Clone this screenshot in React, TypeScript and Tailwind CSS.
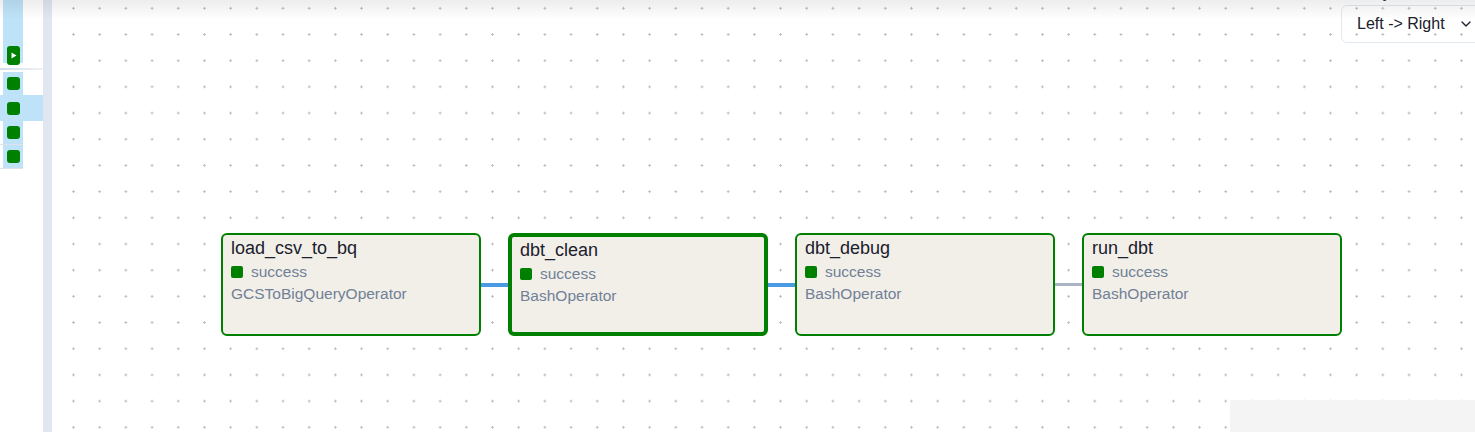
import { ChevronDown } from "lucide-react";

type TaskNode = {
  id: string;
  operator: string;
  selected?: boolean;
};

const tasks: TaskNode[] = [
  { id: "load_csv_to_bq", operator: "GCSToBigQueryOperator" },
  { id: "dbt_clean", operator: "BashOperator", selected: true },
  { id: "dbt_debug", operator: "BashOperator" },
  { id: "run_dbt", operator: "BashOperator" },
];

// edge after each node (except the last)
const edges = ["bg-[#4a9ae4] h-[4px]", "bg-[#4a9ae4] h-[4px]", "bg-[#aab4c4] h-[3px]"];

function StatusSquare({ className = "" }: { className?: string }) {
  return <span className={`block size-[13px] shrink-0 rounded-[3px] bg-[#008000] ${className}`} />;
}

function Sidebar() {
  return (
    <div className="w-[43px] shrink-0 bg-white">
      <div className="ml-[3px] flex h-[63px] w-[20px] items-end bg-[#bee3f8] pl-[4px]">
        <span className="-mb-[2px] flex h-[19px] w-[13px] items-center justify-center rounded-[3px] bg-[#008000]">
          <svg width="6" height="7" viewBox="0 0 6 7" aria-hidden>
            <path d="M0.5 0.5 L5.5 3.5 L0.5 6.5 Z" fill="#fff" />
          </svg>
        </span>
      </div>
      <div className="mt-[5px] h-[2px] w-[43px] bg-gradient-to-r from-[#d3dbe6] to-[#eef2f7]" />
      <div className="mt-[2px] ml-[3px] flex h-[23px] w-[20px] items-center bg-[#bee3f8] pl-[4px]">
        <StatusSquare />
      </div>
      <div className="flex h-[26px] w-[43px] items-center bg-[#bee3f8] pl-[7px]">
        <StatusSquare />
      </div>
      <div className="ml-[3px] flex h-[23px] w-[20px] items-center bg-[#bee3f8] pl-[4px]">
        <StatusSquare />
      </div>
      <div className="h-px w-[23px] bg-[#dde3ea]" />
      <div className="ml-[3px] flex h-[23px] w-[20px] items-center bg-[#bee3f8] pl-[4px]">
        <StatusSquare />
      </div>
      <div className="h-px w-[23px] bg-[#dde3ea]" />
    </div>
  );
}

function Node({ task }: { task: TaskNode }) {
  return (
    <div
      className={`h-[103px] w-[260px] shrink-0 rounded-[6px] border-[#008000] bg-[#f2efe9] px-[8px] pt-[2px] ${
        task.selected ? "border-4" : "border-2"
      }`}
    >
      <p className="text-[18px] leading-[22px] text-[#1a202c]">{task.id}</p>
      <div className="mt-[2px] flex items-center gap-[8px] text-[15.5px] leading-[22px] text-[#718096]">
        <span className="block size-[12px] shrink-0 rounded-[2px] bg-[#008000]" />
        success
      </div>
      <p className="text-[15.5px] leading-[22px] text-[#718096]">{task.operator}</p>
    </div>
  );
}

export default function App() {
  return (
    <div className="relative flex h-[432px] w-full overflow-hidden bg-white font-['Liberation_Sans',Arial,sans-serif]">
      <Sidebar />
      <div className="w-[9px] shrink-0 bg-[#e0e7f0]" />

      <div className="relative flex-1 overflow-hidden bg-white bg-[radial-gradient(circle,#b4b4b4_0.9px,transparent_1.3px)] bg-[length:26.2px_26.2px] bg-[position:8.4px_-4.8px]">
        <div className="flex items-center pt-[233px] pl-[169px]">
          {tasks.map((task, i) => (
            <div key={task.id} className="flex items-center">
              <Node task={task} />
              {i < edges.length && <div className={`w-[27px] shrink-0 ${edges[i]}`} />}
            </div>
          ))}
        </div>

        <span className="absolute left-[1313px] top-[-15px] text-[16px] leading-[16px] text-[#2d3748]">Layout</span>

        <div className="absolute right-[-8px] top-[5px] flex h-[38px] w-[142px] items-center justify-between rounded-[6px] border border-[#e2e8f0] pl-[15px] pr-[8px] text-[16px] text-[#1a202c]">
          <span>Left -&gt; Right</span>
          <ChevronDown className="size-4 text-[#1a202c]" strokeWidth={2} aria-hidden />
        </div>

        <div className="absolute bottom-0 right-0 h-[32px] w-[245px] bg-[#f4f4f4]" />
      </div>

      <div className="pointer-events-none absolute inset-x-0 top-0 h-[20px] bg-gradient-to-b from-[rgba(0,0,0,0.07)] to-transparent" />
    </div>
  );
}
